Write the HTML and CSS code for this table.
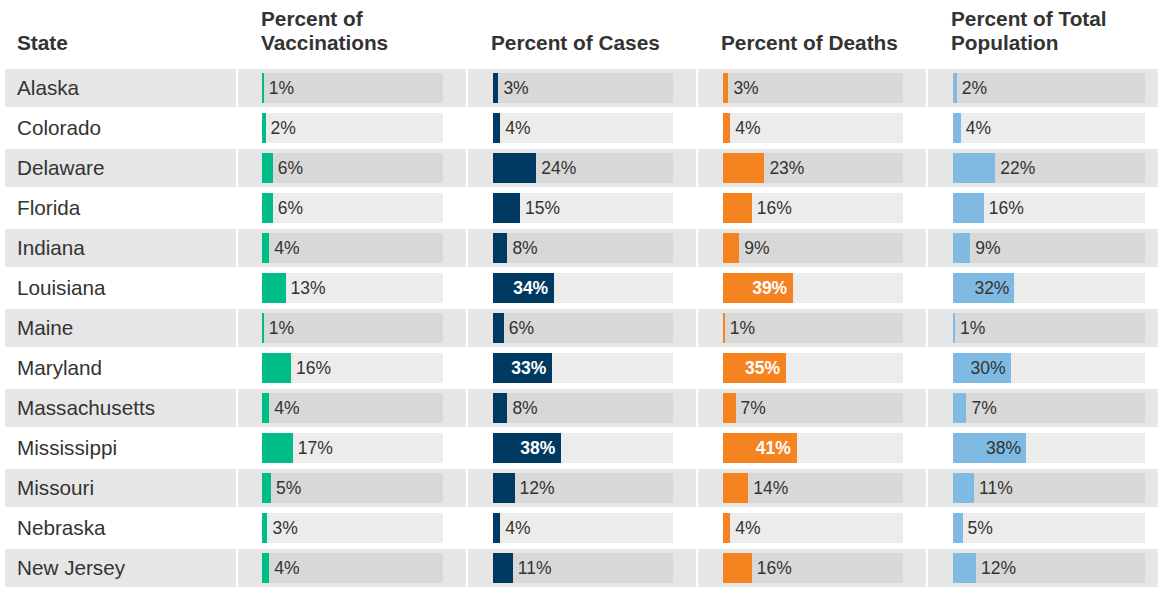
FILE: index.html
```html
<!DOCTYPE html>
<html lang="en">
<head>
<meta charset="utf-8">
<title>State comparison</title>
<link rel="stylesheet" href="styles.css">
</head>
<body>
<div class="table">
  <div class="head">
    <div class="th th-state">State</div>
    <div class="th">Percent of<br>Vaccinations</div>
    <div class="th">Percent of Cases</div>
    <div class="th">Percent of Deaths</div>
    <div class="th">Percent of Total<br>Population</div>
  </div>
  <div class="rows" id="rows"></div>
</div>
<script src="app.js"></script>
</body>
</html>
```
FILE: app.js
```js
var data = [
  ["Alaska", 1, 3, 3, 2],
  ["Colorado", 2, 4, 4, 4],
  ["Delaware", 6, 24, 23, 22],
  ["Florida", 6, 15, 16, 16],
  ["Indiana", 4, 8, 9, 9],
  ["Louisiana", 13, 34, 39, 32],
  ["Maine", 1, 6, 1, 1],
  ["Maryland", 16, 33, 35, 30],
  ["Massachusetts", 4, 8, 7, 7],
  ["Mississippi", 17, 38, 41, 38],
  ["Missouri", 5, 12, 14, 11],
  ["Nebraska", 3, 4, 4, 5],
  ["New Jersey", 4, 11, 16, 12]
];
var kinds = ["vac", "cases", "deaths", "pop"];
var rows = document.getElementById("rows");
data.forEach(function (d, i) {
  var row = document.createElement("div");
  row.className = "row " + (i % 2 === 0 ? "row-alt" : "row-plain");
  var st = document.createElement("div");
  st.className = "cell cell-state";
  st.textContent = d[0];
  row.appendChild(st);
  for (var k = 0; k < 4; k++) {
    var v = d[k + 1];
    var cell = document.createElement("div");
    cell.className = "cell cell-bar";
    var track = document.createElement("div");
    track.className = "track track-" + kinds[k];
    var bar = document.createElement("div");
    bar.className = "bar bar-" + kinds[k];
    bar.style.width = v + "%";
    var lbl = document.createElement("span");
    lbl.textContent = v + "%";
    track.appendChild(bar);
    if (v >= 30) {
      lbl.className = "lbl lbl-in lbl-in-" + kinds[k];
      bar.appendChild(lbl);
    } else {
      lbl.className = "lbl lbl-out";
      track.appendChild(lbl);
    }
    cell.appendChild(track);
    row.appendChild(cell);
  }
  rows.appendChild(row);
});
```
FILE: styles.css
```css
html, body {
  margin: 0;
  padding: 0;
  background: #ffffff;
}
body {
  font-family: "Liberation Sans", Arial, Helvetica, sans-serif;
  color: #333333;
}
.table {
  padding-left: 5px;
}
.head,
.row {
  display: grid;
  grid-template-columns: 231px 228px 228px 228px 230px;
  column-gap: 2px;
}
.head {
  height: 54px;
  align-items: end;
  margin-bottom: 15px;
}
.th {
  font-size: 20.8px;
  font-weight: bold;
  line-height: 23.5px;
  padding-left: 23px;
  color: #333333;
}
.th-state {
  padding-left: 12px;
}
.rows {
  display: flex;
  flex-direction: column;
  row-gap: 2px;
}
.row {
  height: 38px;
}
.cell {
  display: flex;
  align-items: center;
}
.row-alt .cell {
  background: #e6e6e6;
}
.row-plain .cell {
  background: #ffffff;
}
.cell-state {
  font-size: 20.7px;
  padding-left: 12px;
  color: #333333;
}
.cell-bar {
  padding-left: 24px;
}
.track {
  height: 30px;
  width: 181px;
  display: flex;
  align-items: center;
}
.track-cases,
.track-deaths {
  width: 180px;
  margin-left: 1px;
}
.track-pop {
  width: 192px;
  margin-left: 1px;
}
.row-alt .track {
  background: #d8d8d8;
}
.row-plain .track {
  background: #ececec;
}
.bar {
  height: 30px;
  min-width: 1.5px;
  display: flex;
  align-items: center;
  justify-content: flex-end;
  flex: none;
}
.bar-vac { background: #00bc86; }
.bar-cases { background: #003a62; }
.bar-deaths { background: #f5831f; }
.bar-pop { background: #7fbae3; }
.lbl {
  font-size: 17.5px;
  line-height: 20px;
  color: #333333;
  white-space: nowrap;
}
.lbl-out {
  margin-left: 5px;
}
.lbl-in {
  padding-right: 6px;
}
.lbl-in-cases,
.lbl-in-deaths {
  color: #ffffff;
  font-weight: bold;
}
.lbl-in-pop {
  color: #333333;
  padding-right: 5px;
}
```
